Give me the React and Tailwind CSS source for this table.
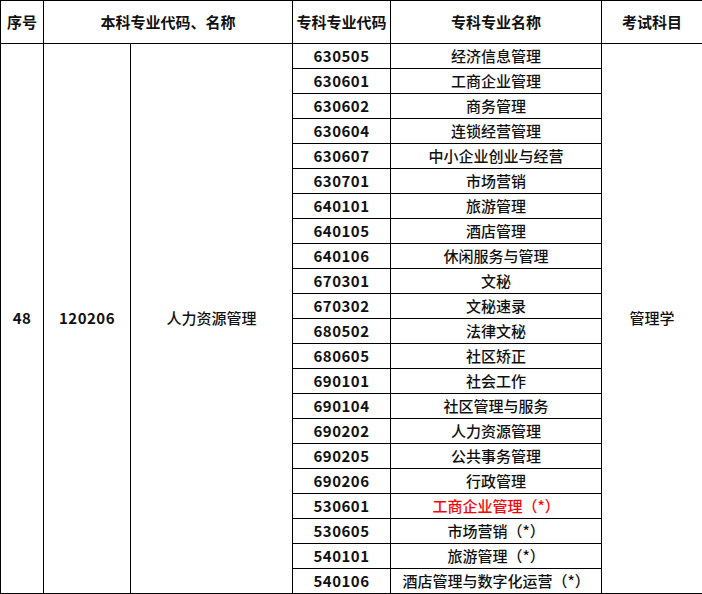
import React from "react";

const rows = [
  ["630505", "经济信息管理"],
  ["630601", "工商企业管理"],
  ["630602", "商务管理"],
  ["630604", "连锁经营管理"],
  ["630607", "中小企业创业与经营"],
  ["630701", "市场营销"],
  ["640101", "旅游管理"],
  ["640105", "酒店管理"],
  ["640106", "休闲服务与管理"],
  ["670301", "文秘"],
  ["670302", "文秘速录"],
  ["680502", "法律文秘"],
  ["680605", "社区矫正"],
  ["690101", "社会工作"],
  ["690104", "社区管理与服务"],
  ["690202", "人力资源管理"],
  ["690205", "公共事务管理"],
  ["690206", "行政管理"],
  ["530601", "工商企业管理（*）", true],
  ["530605", "市场营销（*）"],
  ["540101", "旅游管理（*）"],
  ["540106", "酒店管理与数字化运营（*）"],
];

const cell = "border border-black text-center align-middle p-0 pb-[2px]";

export default function App() {
  return (
    <div className="bg-white w-[702px] h-[594px]">
      <table
        className="border-collapse table-fixed w-[702px] text-[15px] text-[#111] leading-none"
        style={{ fontFamily: '"Noto Sans CJK SC", "Noto Sans", sans-serif' }}
      >
        <colgroup>
          <col className="w-[43px]" />
          <col className="w-[87px]" />
          <col className="w-[162px]" />
          <col className="w-[98px]" />
          <col className="w-[211px]" />
          <col className="w-[101px]" />
        </colgroup>
        <thead>
          <tr className="h-[43px] font-bold">
            <th className={cell}>序号</th>
            <th className={cell} colSpan={2}>本科专业代码、名称</th>
            <th className={cell}>专科专业代码</th>
            <th className={cell}>专科专业名称</th>
            <th className={cell}>考试科目</th>
          </tr>
        </thead>
        <tbody>
          {rows.map((r, i) => (
            <tr key={r[0] + i} className="h-[25px]">
              {i === 0 && (
                <>
                  <td className={cell + " font-semibold tracking-[0.5px]"} rowSpan={rows.length}>48</td>
                  <td className={cell + " font-semibold tracking-[0.5px]"} rowSpan={rows.length}>120206</td>
                  <td className={cell + " font-medium"} rowSpan={rows.length}>人力资源管理</td>
                </>
              )}
              <td className={cell + " font-semibold tracking-[0.5px]"}>{r[0]}</td>
              <td className={cell + " font-medium " + (r[2] ? "text-[#ff0000]" : "")}>{r[1]}</td>
              {i === 0 && (
                <td className={cell + " font-medium"} rowSpan={rows.length}>管理学</td>
              )}
            </tr>
          ))}
        </tbody>
      </table>
    </div>
  );
}
